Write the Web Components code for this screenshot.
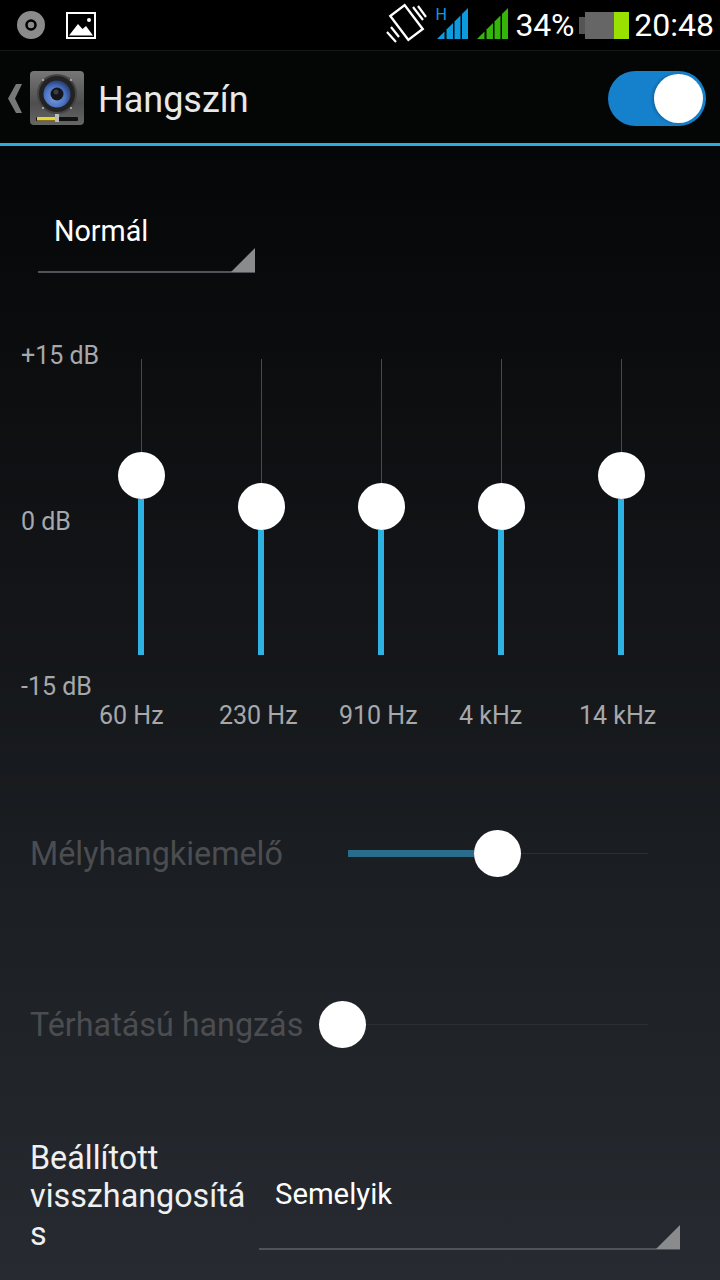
<!DOCTYPE html>
<html lang="hu">
<head>
<meta charset="utf-8">
<title>Hangszín</title>
<style>
    html, body { margin: 0; height: 100%; }
    body {
        width: 720px;
        height: 1280px;
        overflow: hidden;
        font-family: Roboto, "Liberation Sans", sans-serif;
        color: #fff;
        background: linear-gradient(#050607 146px, #272b31 1280px);
    }
</style>
</head>
<body>
<status-bar></status-bar>
<action-bar titulo="Hangszín"></action-bar>

<drop-down id="preset" style="margin: 66px 0 0 38px; width: 217px; height: 61px; font-size: 28.7px;">Normál</drop-down>

<eq-panel>
    <eq-band slot="bands" valor="117"></eq-band>
    <eq-band slot="bands" valor="148"></eq-band>
    <eq-band slot="bands" valor="148"></eq-band>
    <eq-band slot="bands" valor="148"></eq-band>
    <eq-band slot="bands" valor="117"></eq-band>
</eq-panel>

<h-slider etiqueta="Mélyhangkiemelő" inicio="317" relleno="126" style="margin-top: 100px;"></h-slider>
<h-slider etiqueta="Térhatású hangzás" inicio="288" relleno="0" style="margin-top: 124px;"></h-slider>

<reverb-row></reverb-row>

<script>
// Barra de estado con los iconos dibujados en SVG
class StatusBar extends HTMLElement {
    constructor() {
        super();
        this.attachShadow({ mode: 'open' });
    }

    // Las cuatro barras de señal, cortadas por la diagonal
    senal(color) {
        const tramos = [[0, 7.5], [9.5, 16], [17.5, 23.5], [25, 31]];
        return `<svg width="32" height="32" viewBox="0 0 32 32">
            ${tramos.map(([a, b]) => `<polygon fill="${color}" points="${a},31 ${a},${31 - a} ${b},${31 - b} ${b},31"/>`).join('')}
        </svg>`;
    }

    connectedCallback() {
        this.shadowRoot.innerHTML = `
        <style>
            :host {
                display: flex;
                align-items: center;
                box-sizing: border-box;
                height: 51px;
                background: #000;
                border-bottom: 1px solid #14171a;
                padding: 0 6px 0 17px;
                font-size: 32px;
                color: #fff;
            }
            .izq { display: flex; align-items: center; gap: 21px; }
            .der { display: flex; align-items: center; margin-left: auto; }
            svg { display: block; }
            .vibra { margin-right: 6px; overflow: visible; }
            .red { position: relative; width: 33px; height: 40px; margin-right: 8px; }
            .red svg { position: absolute; left: 1px; top: 3px; }
            .red b { position: absolute; left: 0; top: 3px; font: 400 16px/14px Roboto, sans-serif; color: #0d9be0; }
            .gris { margin: 0 7px 2px 0; }
            .pct { margin-right: 5px; letter-spacing: -.2px; }
            .bat { margin-right: 5px; }
        </style>
        <div class="izq">
            <svg width="28" height="28" viewBox="0 0 28 28">
                <circle cx="14" cy="14" r="14" fill="#8b8b8b"/>
                <circle cx="14" cy="14" r="4.5" fill="#8b8b8b" stroke="#000" stroke-width="2.5"/>
            </svg>
            <svg width="30" height="27" viewBox="0 0 30 27">
                <rect x="1" y="1" width="28" height="25" fill="#000" stroke="#fff" stroke-width="2"/>
                <polygon fill="#fff" points="3,23.500 12,12 16.500,17 20,14 27,23.500"/>
                <circle cx="23" cy="8" r="2" fill="#fff"/>
            </svg>
        </div>
        <div class="der">
            <svg class="vibra" width="41" height="40" viewBox="0 0 41 40" fill="none" stroke="#fff">
                <rect x="8.500" y="2.500" width="18" height="30" stroke-width="2.400" transform="rotate(-37 17.500 17.500)"/>
                <path d="M24 2l10 13M29 1l8 11M-2 27l9 10M2 22l8 10" stroke-width="2.200"/>
            </svg>
            <div class="red"><b>H</b>${this.senal('#0d9be0')}</div>
            <div class="gris">${this.senal('#35b50c')}</div>
            <span class="pct">34%</span>
            <svg class="bat" width="50" height="27" viewBox="0 0 50 27">
                <rect x="0" y="5" width="6" height="17" fill="#555"/>
                <rect x="6" y="0" width="30" height="27" fill="#666"/>
                <rect x="35" y="0" width="15" height="27" fill="#9ae000"/>
            </svg>
            <span>20:48</span>
        </div>`;
    }
}

// Barra de acción: volver, icono del altavoz, título e interruptor
class ActionBar extends HTMLElement {
    constructor() {
        super();
        this.attachShadow({ mode: 'open' });
    }

    connectedCallback() {
        const titulo = this.getAttribute('titulo');
        this.shadowRoot.innerHTML = `
        <style>
            :host {
                display: flex;
                align-items: center;
                box-sizing: border-box;
                height: 95px;
                background: #040505;
                border-bottom: 3px solid #2cacdc;
                padding: 2px 14px 0 8px;
            }
            svg { display: block; flex: none; }
            .atras { margin-right: 8px; }
            h1 {
                margin: 4px 0 0 14px;
                font: 400 36px/48px Roboto, sans-serif;
                color: #e8e8e8;
                flex: 1;
            }
            .interruptor {
                width: 98px;
                height: 55px;
                border-radius: 28px;
                background: #1580cc;
                display: flex;
                align-items: center;
                justify-content: flex-end;
                padding-right: 3px;
                box-sizing: border-box;
            }
            .interruptor i {
                width: 49px;
                height: 49px;
                border-radius: 50%;
                background: #fff;
                box-shadow: -2px 0 3px rgba(0,0,0,.2);
            }
        </style>
        <svg class="atras" width="14" height="29" viewBox="0 0 14 29">
            <polygon fill="#777" points="8,0 14,0 7,14.500 14,29 8,29 0,14.500"/>
        </svg>
        <svg width="54" height="54" viewBox="0 0 54 54">
            <defs>
                <linearGradient id="caja" x1="0" y1="0" x2="0" y2="1">
                    <stop offset="0" stop-color="#777"/>
                    <stop offset=".6" stop-color="#4e4e4e"/>
                    <stop offset="1" stop-color="#666"/>
                </linearGradient>
                <radialGradient id="cono" cx=".42" cy=".62" r=".65">
                    <stop offset="0" stop-color="#7f9fe0"/>
                    <stop offset=".6" stop-color="#4a72c0"/>
                    <stop offset="1" stop-color="#24396f"/>
                </radialGradient>
            </defs>
            <rect width="54" height="54" rx="4" fill="url(#caja)"/>
            <circle cx="27" cy="23" r="20" fill="#444"/>
            <circle cx="27" cy="23" r="18" fill="#222"/>
            <circle cx="27" cy="23" r="13.500" fill="url(#cono)"/>
            <circle cx="27" cy="23" r="6.500" fill="#14161a"/>
            <circle cx="26" cy="21" r="2.500" fill="#3a3d44"/>
            <g fill="#bbb">
                <circle cx="13" cy="9" r="1"/><circle cx="41" cy="9" r="1"/>
                <circle cx="13" cy="37" r="1"/><circle cx="41" cy="37" r="1"/>
            </g>
            <rect x="6" y="46" width="42" height="4" rx="1" fill="#111"/>
            <rect x="7" y="46" width="18" height="3.500" fill="#e8d23a"/>
            <rect x="25" y="43" width="4" height="8" fill="#bbb"/>
        </svg>
        <h1>${titulo}</h1>
        <div class="interruptor"><i></i></div>`;
    }
}

// Desplegable con su línea inferior y el triángulo de la esquina
class DropDown extends HTMLElement {
    constructor() {
        super();
        const sombra = this.attachShadow({ mode: 'open' });
        sombra.innerHTML = `
        <style>
            :host {
                display: block;
                box-sizing: border-box;
                position: relative;
                border-bottom: 2px solid #50535a;
                padding-left: 16px;
                line-height: 38px;
                color: #fff;
            }
            i {
                position: absolute;
                right: 0;
                bottom: -1px;
                width: 24px;
                height: 24px;
                background: #8a8b8d;
                clip-path: polygon(100% 0, 100% 100%, 0 100%);
            }
        </style>
        <slot></slot><i></i>`;
    }
}

// Una banda del ecualizador: línea fina, botón y relleno azul
class EqBand extends HTMLElement {
    constructor() {
        super();
        this.attachShadow({ mode: 'open' });
    }

    connectedCallback() {
        const valor = Number(this.getAttribute('valor'));
        this.shadowRoot.innerHTML = `
        <style>
            :host {
                display: flex;
                flex-direction: column;
                align-items: center;
                width: 120px;
                height: 296px;
                margin-top: 17px;
            }
            .fina { width: 1px; height: ${valor - 24}px; background: #46494d; flex: none; }
            .boton {
                width: 47px;
                height: 47px;
                border-radius: 50%;
                background: #fff;
                flex: none;
                position: relative;
                left: 0.5px;
            }
            .azul { width: 6px; flex: 1; background: #2eb2e4; }
        </style>
        <div class="fina"></div>
        <div class="boton"></div>
        <div class="azul"></div>`;
    }
}

// Panel del ecualizador: escala a la izquierda, bandas y frecuencias debajo
class EqPanel extends HTMLElement {
    constructor() {
        super();
        const sombra = this.attachShadow({ mode: 'open' });
        sombra.innerHTML = `
        <style>
            :host {
                display: grid;
                grid-template-columns: 81px 1fr;
                grid-template-rows: 359px 29px;
                margin-top: 69px;
                font-size: 25px;
                line-height: 28px;
                color: #a6a8aa;
            }
            .escala {
                display: flex;
                flex-direction: column;
                justify-content: space-between;
                padding-left: 21px;
                white-space: nowrap;
            }
            .bandas { display: flex; }
            .hz {
                grid-column: 2;
                display: grid;
                grid-template-columns: repeat(5, 120px);
                padding: 1px 0 0 18px;
                white-space: nowrap;
            }
        </style>
        <div class="escala"><span>+15 dB</span><span>0 dB</span><span>-15 dB</span></div>
        <div class="bandas"><slot name="bands"></slot></div>
        <div class="hz"><span>60 Hz</span><span>230 Hz</span><span>910 Hz</span><span>4 kHz</span><span>14 kHz</span></div>`;
    }
}

// Control deslizante horizontal, desactivado
class HSlider extends HTMLElement {
    constructor() {
        super();
        this.attachShadow({ mode: 'open' });
    }

    connectedCallback() {
        const etiqueta = this.getAttribute('etiqueta');
        const inicio = this.getAttribute('inicio');
        const relleno = this.getAttribute('relleno');
        this.shadowRoot.innerHTML = `
        <style>
            :host {
                display: flex;
                align-items: center;
                height: 47px;
                padding: 0 72px 0 30px;
            }
            span {
                width: ${Number(inicio) + 1}px;
                flex: none;
                font-size: 32.3px;
                color: #4b4d50;
                white-space: nowrap;
            }
            .relleno { width: ${relleno}px; height: 7px; background: #2a6d8b; flex: none; }
            .boton { width: 47px; height: 47px; border-radius: 50%; background: #fff; flex: none; }
            .resto { flex: 1; height: 1px; background: #2b2e33; }
        </style>
        <span>${etiqueta}</span>
        <div class="relleno"></div>
        <div class="boton"></div>
        <div class="resto"></div>`;
    }
}

// Última fila: etiqueta partida en tres líneas y su desplegable
class ReverbRow extends HTMLElement {
    constructor() {
        super();
        const sombra = this.attachShadow({ mode: 'open' });
        sombra.innerHTML = `
        <style>
            :host {
                display: flex;
                align-items: flex-start;
                margin-top: 91px;
                padding: 0 40px 0 30px;
            }
            p {
                margin: 0;
                width: 223px;
                flex: none;
                font-size: 32.3px;
                line-height: 38px;
                color: #f0f0f0;
                overflow-wrap: anywhere;
            }
            drop-down {
                flex: 1;
                margin: 1px 0 0 6px;
                height: 110px;
                padding-top: 35px;
                font-size: 29.3px;
            }
        </style>
        <p>Beállított visszhangosítás</p>
        <drop-down>Semelyik</drop-down>`;
    }
}

customElements.define('status-bar', StatusBar);
customElements.define('action-bar', ActionBar);
customElements.define('drop-down', DropDown);
customElements.define('eq-band', EqBand);
customElements.define('eq-panel', EqPanel);
customElements.define('h-slider', HSlider);
customElements.define('reverb-row', ReverbRow);
</script>
</body>
</html>
